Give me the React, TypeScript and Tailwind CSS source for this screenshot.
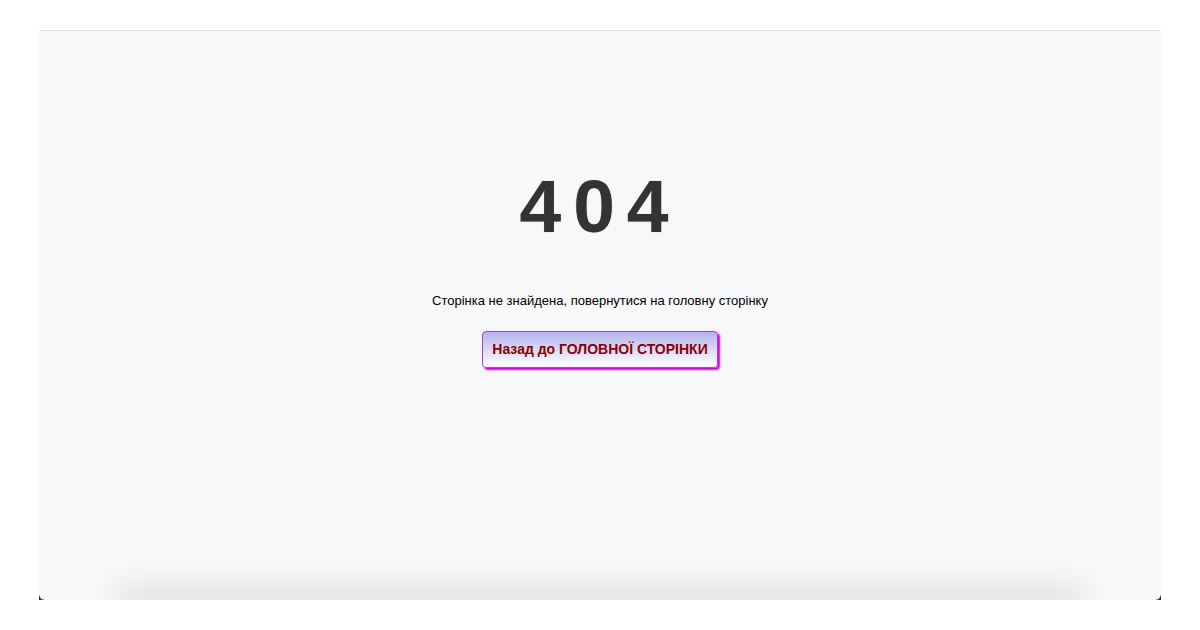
const App = () => {
  return (
    <div className="w-[1200px] h-[630px] bg-white pt-[30px] px-[39px] font-['Liberation_Sans',Arial,sans-serif]">
      {/* dark strip behind rounded bottom corners */}
      <div className="h-[570px] bg-[linear-gradient(to_bottom,transparent_calc(100%-6px),#22352f_calc(100%-6px))]">
        <div className="h-full flex flex-col bg-[#f7f8fa] border-t border-[#e2e3e6] rounded-b-[6px] overflow-hidden">
          <div className="flex-1 flex flex-col items-center pt-[138px]">
            <h1 className="text-[75px] leading-none font-bold tracking-[12px] text-[#333333] [text-shadow:0_0_1px_rgba(0,0,0,0.35)]">
              404
            </h1>
            <p className="mt-[47px] text-[13px] leading-[20px] text-black">
              Сторінка не знайдена, повернутися на головну сторінку
            </p>
            <a
              href="#"
              className="mt-[20px] px-[9px] h-[37px] flex items-center rounded-[4px] border border-[#b040c8] bg-[linear-gradient(to_bottom,#b3b3ee,#ffffff)] shadow-[2px_2px_2px_#d000d0] text-[14px] font-bold text-[#8b0000]"
            >
              Назад до ГОЛОВНОЇ СТОРІНКИ
            </a>
          </div>
          {/* footer shadow bleeding up */}
          <div className="h-0 mx-[90px] shadow-[0_0_30px_12px_rgba(0,0,0,0.11)]" />
        </div>
      </div>
    </div>
  );
};

export default App;
